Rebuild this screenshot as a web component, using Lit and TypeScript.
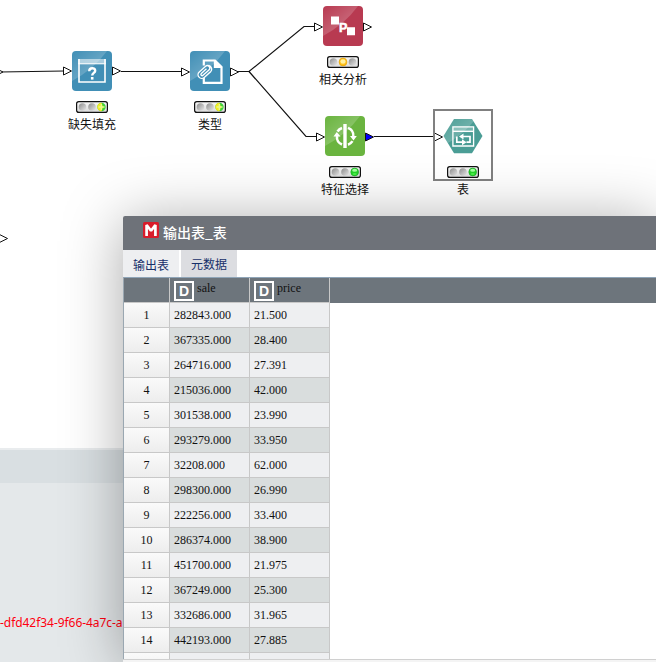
import { LitElement, html, svg, css, nothing } from "lit";
import { customElement, property } from "lit/decorators.js";
import { styleMap } from "lit/directives/style-map.js";

type Kind = "fill" | "type" | "correlation" | "feature" | "table";
type Signal = "mixed" | "yellow" | "green";

interface FlowNode {
  kind: Kind;
  label: string;
  x: number;
  y: number;
  signal: Signal;
  selected?: boolean;
}

const nodes: FlowNode[] = [
  { kind: "fill", label: "缺失填充", x: 72, y: 51, signal: "mixed" },
  { kind: "type", label: "类型", x: 190, y: 51, signal: "mixed" },
  { kind: "correlation", label: "相关分析", x: 323, y: 6, signal: "yellow" },
  { kind: "feature", label: "特征选择", x: 325, y: 116, signal: "green" },
  { kind: "table", label: "表", x: 443, y: 116, signal: "green", selected: true },
];

const rows: [string, string][] = [
  ["282843.000", "21.500"],
  ["367335.000", "28.400"],
  ["264716.000", "27.391"],
  ["215036.000", "42.000"],
  ["301538.000", "23.990"],
  ["293279.000", "33.950"],
  ["32208.000", "62.000"],
  ["298300.000", "26.990"],
  ["222256.000", "33.400"],
  ["286374.000", "38.900"],
  ["451700.000", "21.975"],
  ["367249.000", "25.300"],
  ["332686.000", "31.965"],
  ["442193.000", "27.885"],
];

const fills: Record<Kind, string> = {
  fill: "#418fb6",
  type: "#418fb6",
  correlation: "#b83a51",
  feature: "#6ab43f",
  table: "#4a9d95",
};

const glyphs: Record<Kind, unknown> = {
  fill: svg`
    <path d="M6 8h28v5H6z" fill="#fff" opacity=".55"/>
    <path d="M7 8V31h26V8" fill="none" stroke="#fff" stroke-width="1.600"/>
    <path d="M6.200 12.800h27.600" stroke="#fff" stroke-width="1"/>
    <path d="M17.200 20.200c.2-4 6-3.800 6-.5 0 2.300-3 2.200-3 4.900" fill="none" stroke="#fff" stroke-width="2.400"/>
    <path d="M18.900 26h2.600v2.600h-2.600z" fill="#fff"/>`,
  type: svg`
    <path d="M13.800 14.500V9.500H25l6.500 6.500v15.800H13.800V26.500" fill="none" stroke="#fff" stroke-width="2.200"/>
    <path d="M23.800 8.400V17h8.700z" fill="#fff"/>
    <g transform="rotate(-42 14.500 21.500)">
      <rect x="7.500" y="17" width="15" height="8.500" rx="4.200" fill="#418fb6"/>
      <path d="M19 25h-8a3.700 3.700 0 0 1 0-7.400h8.500a2.500 2.500 0 0 1 0 5H11.500a1.200 1.200 0 0 1 0-2.500H18M12 25.100h7.500a3.900 3.900 0 0 0 3-6" fill="none" stroke="#fff" stroke-width="1.350" stroke-linecap="round"/>
    </g>`,
  correlation: svg`
    <path d="M8 10.500h8v8H8zM24 21.300h8v8h-8z" fill="#fff"/>
    <text x="16" y="25.600" fill="#fff" stroke="#fff" stroke-width=".5" font-family="Liberation Sans, sans-serif" font-weight="700" font-size="12.500">P</text>`,
  feature: svg`
    <path d="M18.300 8h3.400v24h-3.400z" fill="#fff"/>
    <path d="M17 28.500a8.300 8.300 0 0 1-5-8.500M23 11.800a8.300 8.300 0 0 1 5.300 8.500M17 12a8.500 8.500 0 0 0-4.500 3.500M23 28.700a8.500 8.500 0 0 0 4.500-3.500" fill="none" stroke="#fff" stroke-width="2.500"/>
    <path d="M8.500 20.500l3.300-4.500 3.700 4.500zM25 20h6.800l-3.300 4.500z" fill="#fff"/>`,
  table: svg`
    <path d="M9.900 10.900h20.700V30H9.900z" fill="none" stroke="#fff" stroke-width="1.300"/>
    <path d="M9.900 11h20.700v3.500H9.900z" fill="#fff" opacity=".25"/>
    <path d="M9.900 15.300h20.700" stroke="#fff" stroke-width="1.500"/>
    <path d="M13.800 20.500v5.600h5.500M20 20.500h7v5.600h-3.500" fill="none" stroke="#fff" stroke-width="1.700"/>
    <path d="M20.500 17.500v6l-4.500-3zM19 23.200v6l4.500-3z" fill="#fff"/>`,
};

@customElement("status-light")
class StatusLight extends LitElement {
  @property() signal: Signal = "green";

  static styles = css`
    :host { display: block; width: 32px; height: 12px; }
    svg { display: block; }
  `;

  private dot(x: number) {
    return svg`<circle cx=${x} cy="6" r="3.800" fill="url(#dim)"/>`;
  }

  private lit() {
    if (this.signal === "green") {
      return svg`<circle cx="25.700" cy="6" r="3.900" fill="#25d32a" stroke="#17a822" stroke-width=".6"/>
        <ellipse cx="25.700" cy="4.300" rx="2.500" ry="1.500" fill="#a5ffa0"/>
        <ellipse cx="25.700" cy="8" rx="2" ry="1" fill="#4df24a"/>`;
    }
    if (this.signal === "yellow") {
      return svg`<circle cx="16" cy="6" r="3.900" fill="#ffc21c" stroke="#e5a000" stroke-width=".7"/>
        <ellipse cx="16" cy="5.500" rx="2.600" ry="2.200" fill="#fff0a0"/>`;
    }
    return svg`<circle cx="25.500" cy="6" r="4.200" fill="#3fd23a"/>
      <path d="M25.500 1.800A4.200 4.200 0 0 0 25.500 10.200L27 6z" fill="#f5ea20"/>
      <path d="M25.300 3v6M22.500 6h6" stroke="#e9fa8c" stroke-width="1.400"/>`;
  }

  render() {
    return html`<svg width="32" height="12" viewBox="0 0 32 12">
      <defs>
        <linearGradient id="dim" x1="0" y1="0" x2="1" y2="1">
          <stop offset=".15" stop-color="#999"/>
          <stop offset=".95" stop-color="#e4e4e4"/>
        </linearGradient>
        <linearGradient id="case" x1="0" y1="0" x2="0" y2="1">
          <stop offset="0" stop-color="#f6f6f6"/>
          <stop offset="1" stop-color="#dcdcdc"/>
        </linearGradient>
      </defs>
      <rect x=".6" y=".6" width="30.800" height="10.800" rx="2.200" fill="url(#case)" stroke="#111" stroke-width="1.200"/>
      ${this.dot(6.500)}
      ${this.signal === "yellow" ? this.dot(25.500) : this.dot(16)}
      ${this.lit()}
    </svg>`;
  }
}

@customElement("flow-node")
class FlowNodeView extends LitElement {
  @property({ attribute: false }) node!: FlowNode;

  static styles = css`
    :host { display: block; width: 40px; }
    .node { position: relative; display: flex; flex-direction: column; align-items: center; }
    .icon { display: block; width: 40px; height: 40px; margin-bottom: 10px; }
    .label {
      margin-top: 2px;
      white-space: nowrap;
      font: 12px/18px "Noto Sans CJK SC", sans-serif;
      color: #111;
    }
    .frame {
      position: absolute;
      left: -10px;
      top: -7px;
      width: 56px;
      height: 68px;
      border: 2px solid #808080;
    }
  `;

  render() {
    const { kind, label, signal, selected } = this.node;
    const hex = kind === "table";
    return html`<div class="node">
      ${selected ? html`<div class="frame"></div>` : nothing}
      <svg class="icon" viewBox="0 0 40 40">
        <defs>
          <linearGradient id="shine" x1="0" y1="0" x2="1" y2="1">
            <stop offset="0" stop-color="#fff" stop-opacity="0"/>
            <stop offset="1" stop-color="#fff" stop-opacity=".36"/>
          </linearGradient>
          <clipPath id="shape">
            ${hex
              ? svg`<path d="M11 3h18L39.500 20 29 37.300H11L.5 20z"/>`
              : svg`<rect width="40" height="40" rx="4"/>`}
          </clipPath>
        </defs>
        <g clip-path="url(#shape)">
          <rect width="40" height="40" fill=${fills[kind]}/>
          <path d="M0 0H35Q22 18 0 30z" fill="url(#shine)"/>
        </g>
        ${glyphs[kind]}
      </svg>
      <status-light signal=${signal}></status-light>
      <div class="label">${label}</div>
    </div>`;
  }
}

@customElement("output-window")
class OutputWindow extends LitElement {
  static styles = css`
    :host {
      display: flex;
      flex-direction: column;
      background: #fff;
      border-radius: 2px 0 0 0;
      box-shadow: 0 5px 60px rgba(0, 0, 0, 0.34);
    }
    .title {
      flex: none;
      height: 34px;
      box-sizing: border-box;
      padding-left: 20px;
      display: flex;
      align-items: center;
      gap: 4px;
      border-radius: 2px 0 0 0;
      background: #6e7279;
      color: #fff;
      font: 500 14px/20px "Noto Sans CJK SC", sans-serif;
    }
    .title span { margin-bottom: 2px; }
    .logo { margin-bottom: 6px; }
    .tabs { flex: none; display: flex; gap: 2px; height: 27px; }
    .tab {
      box-sizing: border-box;
      width: 56px;
      text-align: center;
      background: #eeeff1;
      color: #17306a;
      font: 12px/30px "Noto Sans CJK SC", sans-serif;
    }
    .tab.alt { background: #dcdde1; line-height: 28px; }
    .grid {
      flex: 1;
      min-height: 0;
      overflow: hidden;
      box-sizing: border-box;
      border-left: 1px solid #9aa7b1;
      font: 12px/24px "Liberation Serif", serif;
      color: #111;
    }
    .row { display: grid; grid-template-columns: 46px 80px 80px 1fr; height: 25px; }
    .cell {
      box-sizing: border-box;
      border-right: 1px solid #c8c8c8;
      border-bottom: 1px solid #c8c8c8;
      padding-left: 4px;
      background: #eeeff1;
    }
    .row:nth-child(odd) .cell { background: #d9dddd; }
    .row .cell.num, .row:nth-child(odd) .cell.num {
      padding: 0;
      text-align: center;
      background: linear-gradient(#fafafa, #ededed);
    }
    .row.head, .row.head .cell { background: #6d757c; }
    .row.head { height: 26px; border-top: 1px solid #8fa5b8; box-sizing: border-box; }
    .row.head:nth-child(odd) .cell { display: flex; gap: 3px; background: #6d757c; line-height: 21px; }
    .kind { flex: none; margin-top: 3px; }
    .foot { flex: none; height: 2px; border-top: 1px solid #d0d0d0; background: #f4f4f4; }
  `;

  private column(name: string) {
    return html`<div class="cell">
      <svg class="kind" width="20" height="20" viewBox="0 0 20 20">
        <rect x="1" y="1" width="18" height="18" fill="none" stroke="#fff" stroke-width="2"/>
        <text x="10" y="15" text-anchor="middle" fill="#fff" font-family="Liberation Sans, sans-serif" font-weight="700" font-size="14">D</text>
      </svg>
      <span>${name}</span>
    </div>`;
  }

  render() {
    return html`
      <div class="title">
        <svg class="logo" width="16" height="16" viewBox="0 0 16 16">
          <rect width="16" height="16" rx="1.500" fill="#d91c2b"/>
          <path d="M3.600 14V3L8 8.800 12.400 3V14" fill="none" stroke="#fff" stroke-width="2.700" stroke-linejoin="bevel"/>
        </svg>
        <span>输出表_表</span>
      </div>
      <div class="tabs">
        <div class="tab">输出表</div>
        <div class="tab alt">元数据</div>
      </div>
      <div class="grid">
        <div class="row head"><div class="cell"></div>${this.column("sale")}${this.column("price")}</div>
        ${rows.map(
          ([sale, price], i) => html`<div class="row">
            <div class="cell num">${i + 1}</div>
            <div class="cell">${sale}</div>
            <div class="cell">${price}</div>
          </div>`
        )}
        <div class="row">
          <div class="cell num"></div><div class="cell"></div><div class="cell"></div>
        </div>
      </div>
      <div class="foot"></div>
    `;
  }
}

@customElement("app-root")
class AppRoot extends LitElement {
  static styles = css`
    :host {
      display: block;
      position: relative;
      width: 656px;
      height: 662px;
      overflow: hidden;
      background: #fff;
    }
    .page { display: flex; flex-direction: column; height: 100%; }
    .canvas { position: relative; flex: none; height: 448px; }
    .wires { display: block; }
    flow-node { position: absolute; }
    .bar { flex: none; height: 33px; border-top: 2px solid #e9ecee; background: #d9dfe2; }
    .log {
      flex: 1;
      background: #e4e8ea;
      color: #ff0010;
      padding-top: 131px;
      font: 12px/18px "Noto Sans", sans-serif;
      letter-spacing: -0.05px;
      white-space: nowrap;
    }
    output-window { position: absolute; left: 123px; top: 216px; right: 0; bottom: 0; }
  `;

  private port(x: number, y: number, fill = "#fff") {
    return svg`<path d="M${x} ${y - 4}L${x + 8} ${y}L${x} ${y + 4}z" fill=${fill} stroke="#111"/>`;
  }

  render() {
    return html`
      <div class="page">
        <div class="canvas">
          <svg class="wires" width="656" height="448" viewBox="0 0 656 448">
            <g fill="none" stroke="#111" stroke-width="1.200">
              <path d="M0 72L64 71M121 71.500H182M238 71.500H249L304 26.500H315M249 71.500L306 136.500H317M374 136.500H435"/>
            </g>
            ${this.port(-5, 72)}
            ${this.port(63.500, 71)}${this.port(112.500, 71)}
            ${this.port(181.500, 72)}${this.port(230.500, 72)}
            ${this.port(314.500, 27)}${this.port(363.500, 27)}
            ${this.port(316.500, 137)}${this.port(365.500, 137, "#00f")}
            ${this.port(434.500, 137)}
            ${this.port(-0.500, 238.500)}
          </svg>
          ${nodes.map(
            (n) => html`<flow-node .node=${n} style=${styleMap({ left: `${n.x}px`, top: `${n.y}px` })}></flow-node>`
          )}
        </div>
        <div class="bar"></div>
        <div class="log">-dfd42f34-9f66-4a7c-a</div>
      </div>
      <output-window></output-window>
    `;
  }
}
